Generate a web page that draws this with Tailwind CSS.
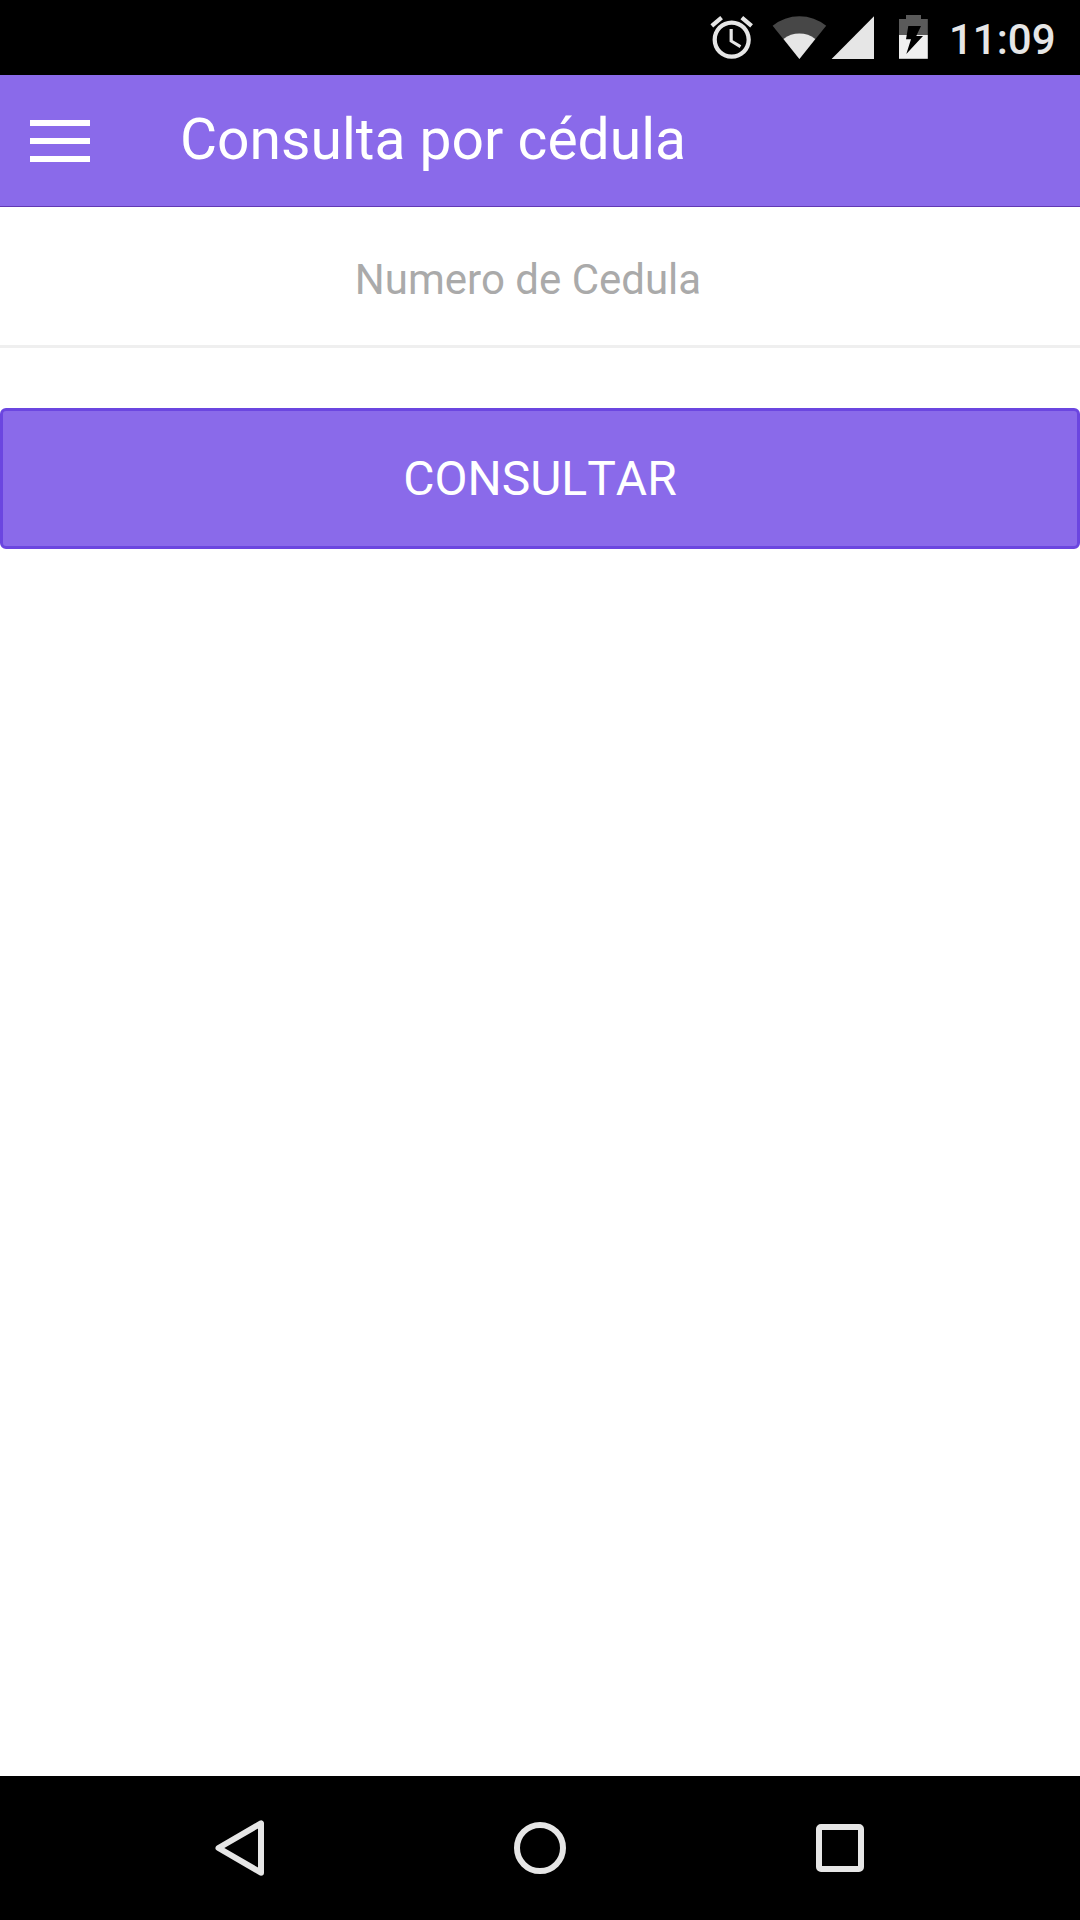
<!DOCTYPE html>
<html lang="es">
  <head>
    <meta charset="UTF-8" />
    <meta name="viewport" content="width=device-width, initial-scale=1.0" />
    <title>Consulta por cédula</title>
    <script src="https://cdn.jsdelivr.net/npm/@tailwindcss/browser@4"></script>
  </head>

  <body class="bg-white font-['Roboto',sans-serif] w-[1080px] h-[1920px] flex flex-col overflow-hidden">
    <!-- Status bar -->
    <div class="h-[75px] shrink-0 bg-black text-[#e6e6e6] flex justify-end pr-6">
      <svg class="w-[51px] h-[75px]" viewBox="0 0 51 75" fill="currentColor">
        <path transform="translate(0.2 12.1) scale(2.125)" d="M22 5.72l-4.6-3.86-1.29 1.53 4.6 3.86L22 5.72zM7.88 3.39L6.6 1.86 2 5.71l1.29 1.53 4.59-3.85zM12.5 8H11v6l4.75 2.85.75-1.23-4-2.37V8zM12 4c-4.97 0-9 4.03-9 9s4.02 9 9 9c4.97 0 9-4.03 9-9s-4.03-9-9-9zm0 16c-3.87 0-7-3.13-7-7s3.13-7 7-7 7 3.13 7 7-3.13 7-7 7z" />
      </svg>
      <svg class="ml-[15px] w-[55px] h-[75px]" viewBox="0 0 55 75">
        <path fill="#474747" d="M27.4 58.9L.6 25.7a42.8 42.8 0 0 1 53.6 0z" />
        <path fill="currentColor" d="M27.4 58.9L11.5 39a25.8 25.8 0 0 1 31.8 0z" />
      </svg>
      <svg class="ml-1 w-[44px] h-[75px]" viewBox="0 0 44 75" fill="currentColor">
        <path d="M.6 58.9L43 16.3v42.6z" />
      </svg>
      <svg class="ml-[23px] w-[30px] h-[75px]" viewBox="0 0 30 75">
        <path fill="#5a5a5a" d="M8 15h15v4h6.8v16H1V19h7z" />
        <path fill="#f0f0f0" d="M1 35h28.8v23.8H1z" />
        <path fill="#000" d="M10.3 26H23l-4.7 10H25L8.3 54 13 39.3H8z" />
      </svg>
      <span id="clock" class="ml-[21px] w-[107px] text-[42px] font-medium leading-[80px] whitespace-nowrap">11:09</span>
    </div>

    <!-- App bar -->
    <header class="h-[132px] shrink-0 bg-[#8a6aea] border-b border-[#6238b4] text-white flex items-center pl-[30px]">
      <button class="flex flex-col gap-3 w-[60px]" aria-label="Menu">
        <span class="h-1.5 w-full bg-white"></span>
        <span class="h-1.5 w-full bg-white"></span>
        <span class="h-1.5 w-full bg-white"></span>
      </button>
      <h1 class="ml-[90px] text-[57px] leading-[64px] pb-0.5 whitespace-nowrap">Consulta por cédula</h1>
    </header>

    <!-- Form -->
    <main class="flex-1">
      <label class="h-[141px] border-b-3 border-[#efefef] flex items-center justify-center pr-6 pt-[7px] text-[42px] text-[#aaaaaa]">
        <span>Numero de Cedula</span>
      </label>
      <button class="mt-[60px] w-full h-[141px] flex items-center justify-center rounded-md border-3 border-[#6b46e0] bg-[#8a6aea] text-white text-[48px] [font-kerning:none]">
        <span>CONSULTAR</span>
      </button>
    </main>

    <!-- Navigation bar -->
    <nav class="h-[144px] shrink-0 bg-black text-[#e6e6e6] flex items-center justify-center gap-[240px]">
      <svg class="w-[60px] h-[60px]" viewBox="0 0 60 60" fill="none" stroke="currentColor" stroke-width="6" stroke-linejoin="round">
        <path d="M8.5 30L51 5.3v49.4z" />
      </svg>
      <svg class="w-[60px] h-[60px]" viewBox="0 0 60 60" fill="none" stroke="currentColor" stroke-width="6">
        <circle cx="30" cy="30" r="23" />
      </svg>
      <svg class="w-[60px] h-[60px]" viewBox="0 0 60 60" fill="none" stroke="currentColor" stroke-width="6">
        <rect x="9" y="9" width="42" height="42" rx="2" />
      </svg>
    </nav>
  </body>
</html>
